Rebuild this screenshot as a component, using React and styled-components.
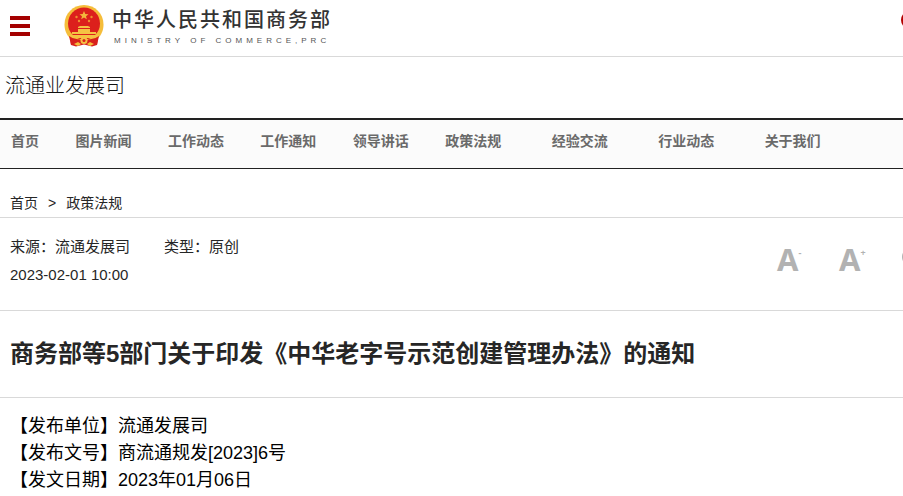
import React from 'react';
import styled, { createGlobalStyle } from 'styled-components';

const GlobalStyle = createGlobalStyle`
  * {
    box-sizing: border-box;
  }
  body {
    margin: 0;
    overflow-x: hidden;
    background: #fff;
    color: #262626;
    font-family: 'Liberation Sans', 'Noto Sans CJK SC', sans-serif;
  }
  a {
    color: inherit;
    text-decoration: none;
  }
  button {
    padding: 0;
    border: 0;
    background: none;
    cursor: pointer;
  }
`;

const Page = styled.div`
  overflow: hidden;
`;

const Header = styled.header`
  display: flex;
  align-items: center;
  height: 57px;
  padding: 0 0 5px 10px;
  border-bottom: 1px solid #d9d9d9;
`;

const MenuButton = styled.button`
  display: flex;
  flex-direction: column;
  gap: 4px;
  width: 20px;
`;

const MenuBar = styled.span`
  height: 4px;
  width: 100%;
  background: #a40000;
`;

const Logo = styled.a`
  display: flex;
  align-items: center;
  gap: 8px;
  margin-left: 34px;
`;

const LogoText = styled.span`
  display: flex;
  flex-direction: column;
  padding-top: 2px;
  white-space: nowrap;
`;

const LogoName = styled.span`
  font-size: 20px;
  font-weight: 500;
  line-height: 28px;
  letter-spacing: 2px;
  color: #333;
`;

const LogoSub = styled.span`
  padding-left: 2px;
  font-size: 8px;
  line-height: 14px;
  letter-spacing: 4px;
  color: #555;
`;

const SearchButton = styled.button`
  display: flex;
  align-self: flex-start;
  margin: 11px -19px 0 auto;
`;

const Department = styled.div`
  padding: 14px 5px 17px;
  font-size: 20px;
  font-weight: 300;
  line-height: 30px;
  color: #111;
`;

const Nav = styled.nav`
  height: 51px;
  padding-left: 11px;
  border-top: 2px solid #222;
  border-bottom: 1px solid #222;
  background: #fbfbfb;
  font-size: 16px;
  line-height: 42px;
  white-space: nowrap;
`;

const NavLink = styled.a`
  margin-right: ${(props) => (props.$wide ? '46px' : '32px')};
  color: #6a6a6a;
  font-size: 14px;
  font-weight: bold;
`;

const Breadcrumb = styled.nav`
  display: flex;
  gap: 10px;
  padding: 24px 10px 4px;
  border-bottom: 1px solid #d9d9d9;
  font-size: 14px;
  line-height: 20px;
`;

const Meta = styled.section`
  display: flex;
  justify-content: space-between;
  height: 93px;
  padding: 15px 0 0 10px;
  border-bottom: 1px solid #d9d9d9;
  font-size: 15px;
  line-height: 28px;
`;

const Source = styled.div`
  display: flex;
  gap: 34px;
`;

const Tools = styled.div`
  display: flex;
  gap: 33px;
  height: 52px;
  align-items: center;
  margin-right: -28px;
`;

const SizeButton = styled.button`
  display: flex;
  align-items: flex-start;
  width: 29px;
  color: #b2b2b2;
  font-family: 'Noto Sans', sans-serif;
  font-size: 31px;
  font-weight: bold;
  line-height: 30px;
`;

const Sign = styled.span`
  font-size: 9px;
  line-height: 18px;
`;

const Title = styled.h1`
  margin: 0;
  padding: 25px 10px;
  border-bottom: 1px solid #d9d9d9;
  font-size: 24px;
  line-height: 36px;
`;

const Article = styled.article`
  padding: 15px 10px 0;
  color: #000;
  font-size: 18px;
  line-height: 27px;

  p {
    margin: 0;
  }
`;

const NAV_ITEMS = [
  { text: '首页' },
  { text: '图片新闻' },
  { text: '工作动态' },
  { text: '工作通知' },
  { text: '领导讲话' },
  { text: '政策法规', wide: true },
  { text: '经验交流', wide: true },
  { text: '行业动态', wide: true },
  { text: '关于我们' },
];

function Emblem() {
  return (
    <svg width="40" height="42" viewBox="0 0 40 42" aria-hidden="true">
      <path d="M6 31L7 40L12 41.500L20 39.500L28 41.500L33 40L34 31Z" fill="#d8201c" />
      <path d="M20 0C9 0 .5 8.500 .5 19.500c0 7 3 12 7.500 15.500h24c4.500-3.500 7.500-8.500 7.500-15.500C39.500 8.500 31 0 20 0z" fill="#f5bd3a" />
      <circle cx="20" cy="18.500" r="16" fill="#dc201c" />
      <path d="M20 6l1.300 3 3.200.2-2.500 2 .8 3.100-2.800-1.700-2.800 1.700.8-3.100-2.500-2 3.200-.2z" fill="#f3b63c" />
      <g fill="#ee8f30">
        <circle cx="12.500" cy="12" r="1.200" />
        <circle cx="27.500" cy="12" r="1.200" />
        <circle cx="15" cy="16" r="1.200" />
        <circle cx="25" cy="16" r="1.200" />
      </g>
      <path d="M14 22l2-1h8l2 1v1H14zM14 24h12v3h6v2H8v-2h6z" fill="#f5c243" />
      <path d="M5 30h30l-3 3H8z" fill="#f5c243" />
      <path d="M5 31q5 4 11 3l-3 5-6 1zM35 31q-5 4-11 3l3 5 6 1z" fill="#d8201c" />
      <circle cx="20" cy="35.500" r="3.500" fill="#f5c243" />
      <circle cx="20" cy="35.500" r="1.500" fill="#dc201c" />
      <path d="M10 39l4-2 3 2-3 2zM30 39l-4-2-3 2 3 2z" fill="#f5bd3a" />
    </svg>
  );
}

export default function App() {
  return (
    <Page>
      <GlobalStyle />
      <Header>
        <MenuButton type="button" aria-label="菜单">
          <MenuBar />
          <MenuBar />
          <MenuBar />
        </MenuButton>
        <Logo href="#">
          <Emblem />
          <LogoText>
            <LogoName>中华人民共和国商务部</LogoName>
            <LogoSub>MINISTRY OF COMMERCE,PRC</LogoSub>
          </LogoText>
        </Logo>
        <SearchButton type="button" aria-label="搜索">
          <svg width="21" height="22" viewBox="0 0 21 22" fill="none" stroke="#b40000" strokeWidth="3">
            <circle cx="9" cy="9" r="7.500" />
            <path d="M14 14l6 6" />
          </svg>
        </SearchButton>
      </Header>
      <Department>流通业发展司</Department>
      <Nav>
        {NAV_ITEMS.map((item) => (
          <React.Fragment key={item.text}>
            <NavLink href="#" $wide={item.wide}>{item.text}</NavLink>
            {' '}
          </React.Fragment>
        ))}
      </Nav>
      <Breadcrumb>
        <a href="#">首页</a>
        <span>&gt;</span>
        <a href="#">政策法规</a>
      </Breadcrumb>
      <Meta>
        <div>
          <Source>
            <span>来源：流通发展司</span>
            <span>类型：原创</span>
          </Source>
          <time>2023-02-01 10:00</time>
        </div>
        <Tools>
          <SizeButton type="button">
            A
            <Sign>-</Sign>
          </SizeButton>
          <SizeButton type="button">
            A
            <Sign>+</Sign>
          </SizeButton>
          <button type="button" aria-label="分享">
            <svg width="30" height="30" viewBox="0 0 30 30" fill="none" stroke="#b2b2b2" strokeWidth="3">
              <circle cx="10" cy="14" r="7.500" />
              <path d="M16 10l9-5M16 18l9 5" />
            </svg>
          </button>
        </Tools>
      </Meta>
      <Title>商务部等5部门关于印发《中华老字号示范创建管理办法》的通知</Title>
      <Article>
        <p>【发布单位】流通发展司</p>
        <p>【发布文号】商流通规发[2023]6号</p>
        <p>【发文日期】2023年01月06日</p>
      </Article>
    </Page>
  );
}
